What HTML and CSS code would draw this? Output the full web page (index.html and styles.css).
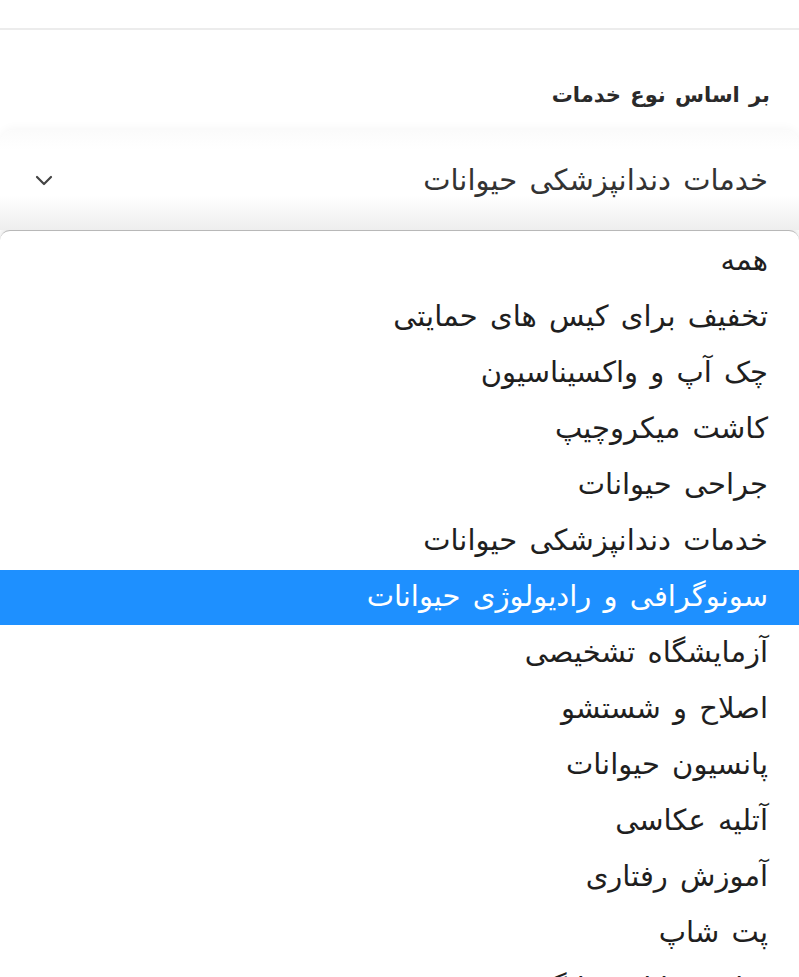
FILE: index.html
```html
<!DOCTYPE html>
<html lang="fa" dir="rtl">
<head>
<meta charset="utf-8">
<title>فیلتر خدمات</title>
<link rel="stylesheet" href="styles.css">
</head>
<body>
<div class="topbar"></div>
<section class="filter">
  <div class="filter-label">بر اساس نوع خدمات</div>
  <div class="select">
    <span class="select-value">خدمات دندانپزشکی حیوانات</span>
    <svg class="chevron" width="18" height="11" viewBox="0 0 18 11"><path d="M2 2 L9 9 L16 2" fill="none" stroke="#444" stroke-width="2.2" stroke-linecap="round" stroke-linejoin="round"/></svg>
  </div>
</section>
<ul class="popup">
  <li class="opt">همه</li>
  <li class="opt">تخفیف برای کیس های حمایتی</li>
  <li class="opt">چک آپ و واکسیناسیون</li>
  <li class="opt">کاشت میکروچیپ</li>
  <li class="opt">جراحی حیوانات</li>
  <li class="opt">خدمات دندانپزشکی حیوانات</li>
  <li class="opt selected">سونوگرافی و رادیولوژی حیوانات</li>
  <li class="opt">آزمایشگاه تشخیصی</li>
  <li class="opt">اصلاح و شستشو</li>
  <li class="opt">پانسیون حیوانات</li>
  <li class="opt">آتلیه عکاسی</li>
  <li class="opt">آموزش رفتاری</li>
  <li class="opt">پت شاپ</li>
  <li class="opt">هتل حیوانات خانگی</li>
</ul>
</body>
</html>
```
FILE: styles.css
```css
html, body {
  margin: 0;
  padding: 0;
  background: #ffffff;
  height: 977px;
  overflow: hidden;
}
body {
  font-family: "DejaVu Sans", "Noto Sans", sans-serif;
  color: #222;
}
.topbar {
  height: 28px;
  border-bottom: 2px solid #ececec;
}
.filter {
  display: flex;
  flex-direction: column;
}
.filter-label {
  font-weight: bold;
  font-size: 21px;
  word-spacing: 2px;
  color: #2a2a2a;
  padding: 50px 29px 0 0;
  height: 50px;
  line-height: 30px;
}
.select {
  height: 100px;
  display: flex;
  align-items: center;
  justify-content: space-between;
  padding: 0 31px 0 35px;
  background: linear-gradient(#fbfbfb, #ffffff 20%, #ffffff 65%, #eeeeee);
  border-radius: 14px 14px 0 0;
  box-shadow: 0 -3px 8px rgba(0,0,0,0.03);
}
.select-value {
  font-size: 29px;
  word-spacing: 3px;
  color: #333;
}
.chevron {
  display: block;
}
.popup {
  list-style: none;
  margin: 0;
  padding: 3px 0 0;
  border-top: 1.5px solid #b9b9b9;
  border-radius: 10px 10px 0 0;
  box-shadow: 0 -2px 6px rgba(0,0,0,0.12);
  background: #fff;
}
.opt {
  height: 56px;
  line-height: 52px;
  padding-right: 31px;
  font-size: 29px;
  word-spacing: 3px;
  color: #1f1f1f;
  white-space: nowrap;
}
.opt.selected {
  background: #1e90ff;
  color: #fff;
  height: 55px;
  margin-bottom: 1px;
}
```
